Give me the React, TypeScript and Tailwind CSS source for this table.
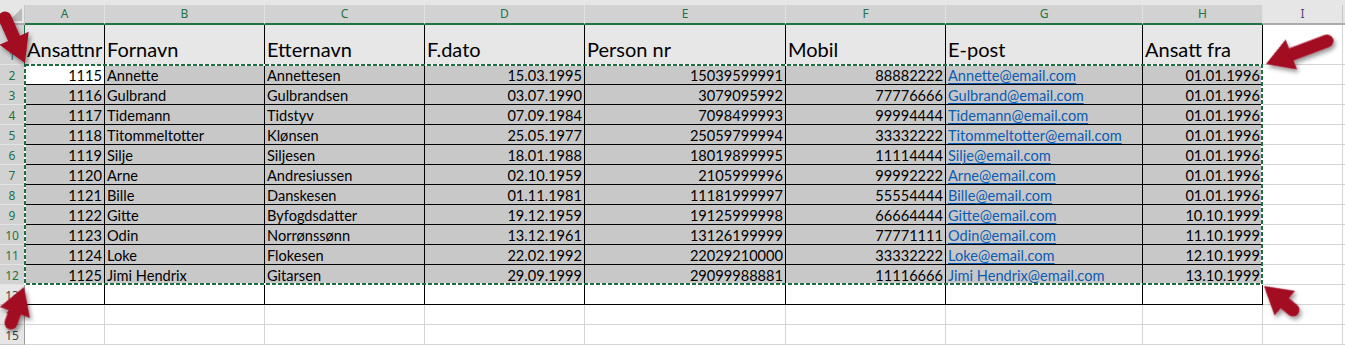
import React from "react"

const colW = [
  "w-[80px]",
  "w-[160px]",
  "w-[160px]",
  "w-[160px]",
  "w-[201px]",
  "w-[160px]",
  "w-[197px]",
  "w-[120px]",
]
const letters = ["A", "B", "C", "D", "E", "F", "G", "H"]
const align = ["r", "l", "l", "r", "r", "r", "link", "r"]

const header = [
  "Ansattnr",
  "Fornavn",
  "Etternavn",
  "F.dato",
  "Person nr",
  "Mobil",
  "E-post",
  "Ansatt fra",
]

const rows = [
  ["1115", "Annette", "Annettesen", "15.03.1995", "15039599991", "88882222", "Annette@email.com", "01.01.1996"],
  ["1116", "Gulbrand", "Gulbrandsen", "03.07.1990", "3079095992", "77776666", "Gulbrand@email.com", "01.01.1996"],
  ["1117", "Tidemann", "Tidstyv", "07.09.1984", "7098499993", "99994444", "Tidemann@email.com", "01.01.1996"],
  ["1118", "Titommeltotter", "Klønsen", "25.05.1977", "25059799994", "33332222", "Titommeltotter@email.com", "01.01.1996"],
  ["1119", "Silje", "Siljesen", "18.01.1988", "18019899995", "11114444", "Silje@email.com", "01.01.1996"],
  ["1120", "Arne", "Andresiussen", "02.10.1959", "2105999996", "99992222", "Arne@email.com", "01.01.1996"],
  ["1121", "Bille", "Danskesen", "01.11.1981", "11181999997", "55554444", "Bille@email.com", "01.01.1996"],
  ["1122", "Gitte", "Byfogdsdatter", "19.12.1959", "19125999998", "66664444", "Gitte@email.com", "10.10.1999"],
  ["1123", "Odin", "Norrønssønn", "13.12.1961", "13126199999", "77771111", "Odin@email.com", "11.10.1999"],
  ["1124", "Loke", "Flokesen", "22.02.1992", "22029210000", "33332222", "Loke@email.com", "12.10.1999"],
  ["1125", "Jimi Hendrix", "Gitarsen", "29.09.1999", "29099988881", "11116666", "Jimi Hendrix@email.com", "13.10.1999"],
]

// tail -> tip, in page pixels
const arrows = [
  { t: [5, 18], p: [25, 63] },
  { t: [1327, 41], p: [1266, 64] },
  { t: [11, 323], p: [24, 287] },
  { t: [1293, 310], p: [1264, 286] },
]

const RowHead = ({ n, selected, tall }: { n: number; selected: boolean; tall?: boolean }) => (
  <div
    className={`w-[25px] shrink-0 flex items-end justify-center border-r border-b font-['Noto_Sans',sans-serif] text-[12px] leading-[16px] ${
      tall ? "h-[40px]" : "h-[20px]"
    } ${
      selected
        ? "bg-[#d2d2d2] text-[#217346] border-r-[#217346] border-b-[#e3e3e3]"
        : "bg-[#e6e6e6] text-[#444444] border-r-[#9b9b9b] border-b-[#c6c6c6]"
    }`}
  >
    {n}
  </div>
)

const Arrow = ({ t, p }: { t: number[]; p: number[] }) => {
  const dx = p[0] - t[0]
  const dy = p[1] - t[1]
  const len = Math.sqrt(dx * dx + dy * dy)
  const ang = (Math.atan2(dy, dx) * 180) / Math.PI
  const s = 6.5
  const h = 27
  const w = 16
  const b = len - h
  return (
    <path
      transform={`translate(${t[0]} ${t[1]}) rotate(${ang})`}
      d={`M0 ${-s} L${b} ${-s} L${b} ${-w} L${len} 0 L${b} ${w} L${b} ${s} L0 ${s} A${s} ${s} 0 0 1 0 ${-s} Z`}
      fill="#a20a22"
    />
  )
}

export default function App() {
  return (
    <div className="relative w-[1345px] h-[345px] overflow-hidden bg-white font-['Lato',sans-serif] text-black">
      <div className="h-[5px] bg-[#e6e6e6]" />

      {/* column letters */}
      <div className="flex h-[20px]">
        <div className="relative w-[25px] shrink-0 bg-[#e6e6e6] border-r border-r-[#c6c6c6] border-b-2 border-b-[#ababab]">
          <svg className="absolute left-0 top-0" width="25" height="18">
            <polygon points="22,3 22,16 9,16" fill="#b9b9b9" />
          </svg>
        </div>
        {letters.map((l, i) => (
          <div
            key={l}
            className={`${colW[i]} shrink-0 flex items-center justify-center bg-[#d2d2d2] text-[#217346] border-r border-r-[#e2e2e2] border-b-2 border-b-[#217346] font-['Noto_Sans',sans-serif] text-[12px] leading-[16px]`}
          >
            {l}
          </div>
        ))}
        <div className="w-[80px] shrink-0 flex items-center justify-center bg-[#e6e6e6] text-[#5a3d7a] border-r border-r-[#c6c6c6] border-b-2 border-b-[#ababab] font-['Noto_Sans',sans-serif] text-[12px] leading-[16px]">
          I
        </div>
        <div className="flex-1 bg-[#e6e6e6] border-b-2 border-b-[#ababab]" />
      </div>

      {/* row 1 */}
      <div className="flex h-[40px]">
        <RowHead n={1} selected tall />
        {header.map((h, i) => (
          <div
            key={h}
            className={`${colW[i]} shrink-0 flex items-end pl-[2px] pb-[3px] bg-[#e7e7e7] border-r border-b border-black text-[20px] leading-[24px] whitespace-nowrap overflow-hidden`}
          >
            {h}
          </div>
        ))}
        <div className="w-[80px] shrink-0 border-r border-b border-[#d4d4d4]" />
        <div className="flex-1 border-b border-[#d4d4d4]" />
      </div>

      {/* data rows */}
      {rows.map((r, ri) => (
        <div key={ri} className="flex h-[20px]">
          <RowHead n={ri + 2} selected />
          {r.map((v, i) => (
            <div
              key={i}
              className={`${colW[i]} shrink-0 flex items-end px-[2px] border-r border-b border-black text-[14.6px] leading-[17px] whitespace-nowrap overflow-hidden ${
                ri === 0 && i === 0 ? "bg-white" : "bg-[#c8c8c8]"
              } ${align[i] === "r" ? "justify-end" : "justify-start"}`}
            >
              {align[i] === "link" ? (
                <span className="text-[#0b5cb5] underline decoration-1 underline-offset-[2px]">{v}</span>
              ) : (
                v
              )}
            </div>
          ))}
          <div className="w-[80px] shrink-0 border-r border-b border-[#d4d4d4]" />
          <div className="flex-1 border-b border-[#d4d4d4]" />
        </div>
      ))}

      {/* row 13, bordered but empty */}
      <div className="flex h-[20px]">
        <RowHead n={13} selected={false} />
        {colW.map((w, i) => (
          <div key={i} className={`${w} shrink-0 border-r border-b border-black`} />
        ))}
        <div className="w-[80px] shrink-0 border-r border-b border-[#d4d4d4]" />
        <div className="flex-1 border-b border-[#d4d4d4]" />
      </div>

      {[14, 15].map((n) => (
        <div key={n} className="flex h-[20px]">
          <RowHead n={n} selected={false} />
          {colW.map((w, i) => (
            <div key={i} className={`${w} shrink-0 border-r border-b border-[#d4d4d4]`} />
          ))}
          <div className="w-[80px] shrink-0 border-r border-b border-[#d4d4d4]" />
          <div className="flex-1 border-b border-[#d4d4d4]" />
        </div>
      ))}

      {/* copy marquee + annotation arrows */}
      <svg className="absolute left-0 top-0 pointer-events-none" width="1345" height="345">
        <defs>
          <filter id="sh" x="-50%" y="-50%" width="200%" height="200%">
            <feDropShadow dx="2" dy="3" stdDeviation="2" floodColor="#000" floodOpacity="0.4" />
          </filter>
        </defs>
        <rect x="25" y="65" width="1237" height="219" fill="none" stroke="#ffffff" strokeWidth="2" />
        <rect x="25" y="65" width="1237" height="219" fill="none" stroke="#1f6e43" strokeWidth="2" strokeDasharray="4 2" />
        <g filter="url(#sh)">
          {arrows.map((a, i) => (
            <Arrow key={i} t={a.t} p={a.p} />
          ))}
        </g>
      </svg>
    </div>
  )
}
